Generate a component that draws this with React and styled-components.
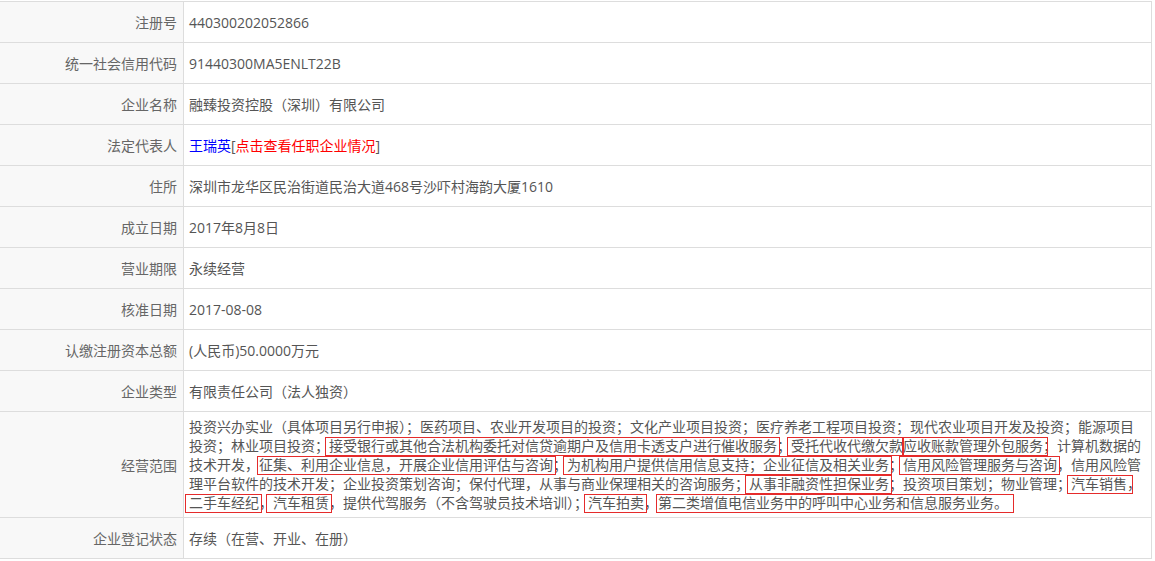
import React from 'react';
import styled, { createGlobalStyle } from 'styled-components';

const GlobalStyle = createGlobalStyle`
    html, body {
        margin: 0;
        padding: 0;
        background: #fff;
    }
    body {
        font-family: "Open Sans", "Noto Sans CJK SC", sans-serif;
        font-size: 14px;
        color: #555;
    }
`;

const Table = styled.div`
    width: 1151px;
    margin-top: 1px;
    border-top: 1px solid #dddddd;
    border-right: 1px solid #dddddd;
`;

const Row = styled.div`
    display: flex;
    min-height: 40px;
    border-bottom: 1px solid #dddddd;
`;

const Label = styled.div`
    flex: none;
    width: 184px;
    box-sizing: border-box;
    padding-right: 6px;
    background: #f8f8f8;
    border-right: 1px solid #dddddd;
    color: #666;
    display: flex;
    align-items: center;
    justify-content: flex-end;
    white-space: nowrap;
`;

const Value = styled.div`
    flex: 1;
    padding: 5px;
    display: flex;
    align-items: center;
`;

const Text = styled.div`
    line-height: 19px;
    color: #555;
`;

const PersonLink = styled.a`
    color: #0000ff;
    text-decoration: none;
`;

const JobLink = styled.a`
    color: #ff0000;
    text-decoration: none;
`;

// red annotation rectangles over parts of the scope text
const Mark = styled.span`
    position: relative;
    &::after {
        content: '';
        position: absolute;
        left: ${p => (p.$left != null ? p.$left : -4)}px;
        right: ${p => (p.$right != null ? p.$right : -3)}px;
        top: 1px;
        bottom: -1px;
        border: 1px solid #e52b2b;
        pointer-events: none;
    }
`;

const rows = [
    { label: '注册号', value: '440300202052866' },
    { label: '统一社会信用代码', value: '91440300MA5ENLT22B' },
    { label: '企业名称', value: '融臻投资控股（深圳）有限公司' },
    { label: '法定代表人', type: 'person' },
    { label: '住所', value: '深圳市龙华区民治街道民治大道468号沙吓村海韵大厦1610' },
    { label: '成立日期', value: '2017年8月8日' },
    { label: '营业期限', value: '永续经营' },
    { label: '核准日期', value: '2017-08-08' },
    { label: '认缴注册资本总额', value: '(人民币)50.0000万元' },
    { label: '企业类型', value: '有限责任公司（法人独资）' },
    { label: '经营范围', type: 'scope' },
    { label: '企业登记状态', value: '存续（在营、开业、在册）' },
];

function Scope() {
    return (
        <Text>
            投资兴办实业（具体项目另行申报）；医药项目、农业开发项目的投资；文化产业项目投资；医疗养老工程项目投资；现代农业项目开发及投资；能源项目投资；林业项目投资；
            <Mark>接受银行或其他合法机构委托对信贷逾期户及信用卡透支户进行催收服务</Mark>；
            <Mark $right={-1}>受托代收代缴欠款</Mark>
            <Mark $left={-1} $right={-5}>应收账款管理外包服务</Mark>；计算机数据的技术开发，
            <Mark $left={-2}>征集、利用企业信息，开展企业信用评估与咨询</Mark>；
            <Mark>为机构用户提供信用信息支持；企业征信及相关业务</Mark>；
            <Mark>信用风险管理服务与咨询</Mark>，信用风险管理平台软件的技术开发；企业投资策划咨询；保付代理，从事与商业保理相关的咨询服务；
            <Mark>从事非融资性担保业务</Mark>；投资项目策划；物业管理；
            <Mark $right={-6}>汽车销售</Mark>，
            <Mark>二手车经纪</Mark>，
            <Mark $left={-7}>汽车租赁</Mark>，提供代驾服务（不含驾驶员技术培训）；
            <Mark>汽车拍卖</Mark>，
            <Mark $left={-2} $right={-6}>第二类增值电信业务中的呼叫中心业务和信息服务业务。</Mark>
        </Text>
    );
}

function Person() {
    return (
        <Text>
            <PersonLink href="#">王瑞英</PersonLink>[<JobLink href="#">点击查看任职企业情况</JobLink>]
        </Text>
    );
}

export default function App() {
    return (
        <>
            <GlobalStyle />
            <Table>
                {rows.map(row => (
                    <Row key={row.label}>
                        <Label>{row.label}</Label>
                        <Value>
                            {row.type === 'scope' ? <Scope /> :
                                row.type === 'person' ? <Person /> :
                                    <Text>{row.value}</Text>}
                        </Value>
                    </Row>
                ))}
            </Table>
        </>
    );
}
